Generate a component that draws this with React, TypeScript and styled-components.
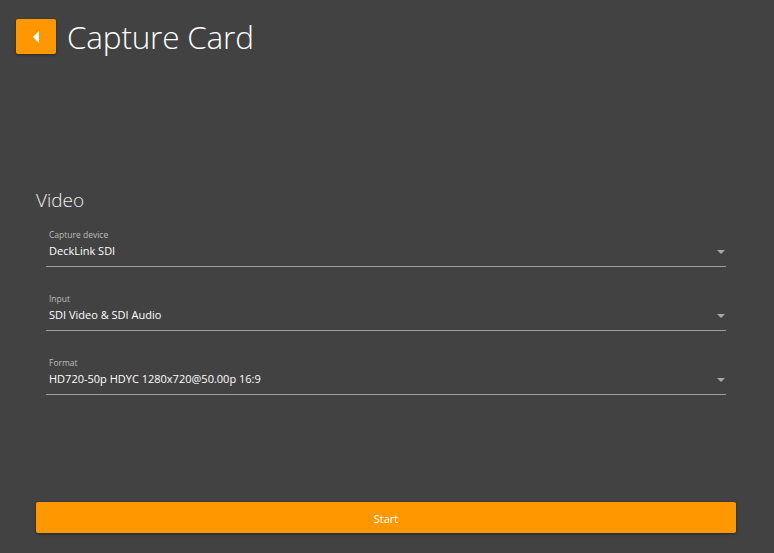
import React from 'react';
import styled, { createGlobalStyle } from 'styled-components';

const GlobalStyle = createGlobalStyle`
  html, body {
    margin: 0;
    padding: 0;
    background: #424242;
    font-family: 'Open Sans', 'Noto Sans', sans-serif;
    color: #fff;
  }
`;

const Page = styled.div`
  width: 774px;
  height: 553px;
  display: flex;
  flex-direction: column;
  box-sizing: border-box;
  padding: 19px 0 20px 0;
`;

const Header = styled.div`
  display: flex;
  align-items: center;
  gap: 11px;
  padding-left: 16px;
  height: 35px;
`;

const BackButton = styled.button`
  width: 40px;
  height: 35px;
  background: #ff9800;
  border: none;
  border-radius: 2px;
  box-shadow: 0 1px 3px rgba(0, 0, 0, 0.4);
  display: flex;
  align-items: center;
  justify-content: center;
  padding: 0;
  cursor: pointer;
`;

const Title = styled.h1`
  margin: 0;
  font-size: 31.5px;
  font-weight: 300;
  color: #fff;
  letter-spacing: -0.2px;
`;

const Section = styled.div`
  margin-top: 134px;
  padding: 0 38px 0 36px;
  display: flex;
  flex-direction: column;
`;

const SectionTitle = styled.h2`
  margin: 0 0 14px 0;
  font-size: 19px;
  font-weight: 300;
  color: #f0f0f0;
  line-height: 24px;
`;

const Fields = styled.div`
  display: flex;
  flex-direction: column;
  gap: 23px;
  padding: 0 10px;
`;

const Field = styled.div`
  display: flex;
  flex-direction: column;
  border-bottom: 1px solid #9e9e9e;
  padding: 3px 0 0 3px;
  height: 41px;
  box-sizing: border-box;
  position: relative;
`;

const Label = styled.span`
  font-size: 8.5px;
  color: #bdbdbd;
  line-height: 12px;
`;

const Value = styled.span`
  margin-top: 1px;
  font-size: 11px;
  color: #fff;
  line-height: 18px;
`;

const Arrow = styled.svg`
  position: absolute;
  right: 1px;
  top: 24px;
`;

const StartButton = styled.button`
  margin: auto 38px 0 36px;
  height: 31px;
  padding-top: 2px;
  background: #ff9800;
  border: none;
  border-radius: 2px;
  box-shadow: 0 1px 3px rgba(0, 0, 0, 0.45);
  color: #fff;
  font-family: 'Open Sans', 'Noto Sans', sans-serif;
  font-size: 11px;
  cursor: pointer;
`;

const fields = [
  { label: 'Capture device', value: 'DeckLink SDI' },
  { label: 'Input', value: 'SDI Video & SDI Audio' },
  { label: 'Format', value: 'HD720-50p HDYC 1280x720@50.00p 16:9' },
];

export default function App() {
  return (
    <>
      <GlobalStyle />
      <Page>
        <Header>
          <BackButton>
            <svg width="8" height="12" viewBox="0 0 8 12">
              <polygon points="7,0 7,12 1,6" fill="#fff" />
            </svg>
          </BackButton>
          <Title>Capture Card</Title>
        </Header>
        <Section>
          <SectionTitle>Video</SectionTitle>
          <Fields>
            {fields.map((f) => (
              <Field key={f.label}>
                <Label>{f.label}</Label>
                <Value>{f.value}</Value>
                <Arrow width="8" height="4" viewBox="0 0 8 4">
                  <polygon points="0,0 8,0 4,4" fill="#a8a8a8" />
                </Arrow>
              </Field>
            ))}
          </Fields>
        </Section>
        <StartButton>Start</StartButton>
      </Page>
    </>
  );
}
